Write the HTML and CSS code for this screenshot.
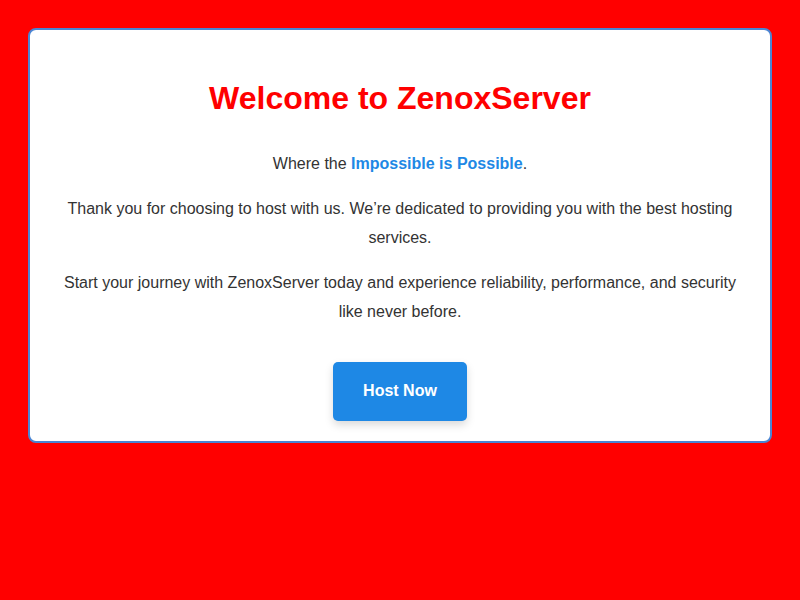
FILE: index.html
```html
<!DOCTYPE html>
<html lang="en">
<head>
<meta charset="utf-8">
<title>ZenoxServer</title>
<link rel="stylesheet" href="styles.css">
</head>
<body>
  <div class="card">
    <h1 class="title">Welcome to ZenoxServer</h1>
    <p class="text">Where the <strong class="accent">Impossible is Possible</strong>.</p>
    <p class="text">Thank you for choosing to host with us. We’re dedicated to providing you with the best hosting services.</p>
    <p class="text">Start your journey with ZenoxServer today and experience reliability, performance, and security like never before.</p>
    <a class="btn" href="#">Host Now</a>
  </div>
</body>
</html>
```

FILE: styles.css
```css
html, body {
  margin: 0;
  padding: 0;
}
body {
  background: #ff0000;
  padding: 28px;
  font-family: "Liberation Sans", Arial, sans-serif;
  color: #333;
  height: 600px;
  box-sizing: border-box;
}
.card {
  background: #fff;
  border: 2px solid #4a86d4;
  border-radius: 8px;
  padding: 32px 30px 20px;
  text-align: center;
}
.title {
  color: #ff0000;
  font-size: 32px;
  font-weight: bold;
  margin: 18px 0 32px;
}
.text {
  font-size: 16px;
  line-height: 29px;
  margin: 0 0 16px;
}
.accent {
  color: #1e88e5;
}
.btn {
  display: inline-block;
  margin-top: 20px;
  background: #1e88e5;
  color: #fff;
  font-weight: bold;
  font-size: 16px;
  text-decoration: none;
  padding: 19px 30px 21px;
  line-height: 19px;
  border-radius: 5px;
  box-shadow: 0 4px 8px rgba(0,0,0,0.15);
}
```
